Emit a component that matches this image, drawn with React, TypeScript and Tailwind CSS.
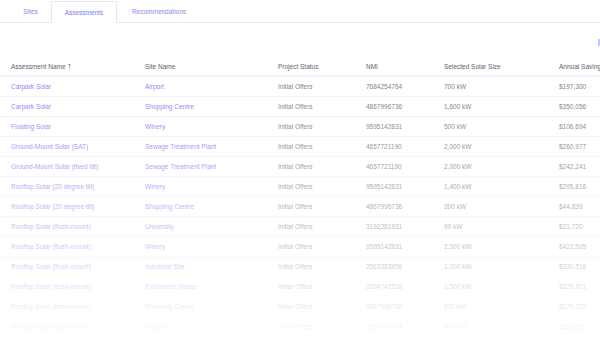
import React from 'react';

type Row = {
  name: string;
  site: string;
  status: string;
  nmi: string;
  size: string;
  savings: string;
};

const rows: Row[] = [
  { name: 'Carpark Solar', site: 'Airport', status: 'Initial Offers', nmi: '7684254764', size: '700 kW', savings: '$197,300' },
  { name: 'Carpark Solar', site: 'Shopping Centre', status: 'Initial Offers', nmi: '4867996736', size: '1,600 kW', savings: '$350,056' },
  { name: 'Floating Solar', site: 'Winery', status: 'Initial Offers', nmi: '9595142831', size: '500 kW', savings: '$106,694' },
  { name: 'Ground-Mount Solar (SAT)', site: 'Sewage Treatment Plant', status: 'Initial Offers', nmi: '4657721190', size: '2,000 kW', savings: '$260,977' },
  { name: 'Ground-Mount Solar (fixed tilt)', site: 'Sewage Treatment Plant', status: 'Initial Offers', nmi: '4657721190', size: '2,000 kW', savings: '$242,241' },
  { name: 'Rooftop Solar (20 degree tilt)', site: 'Winery', status: 'Initial Offers', nmi: '9595142831', size: '1,400 kW', savings: '$295,816' },
  { name: 'Rooftop Solar (20 degree tilt)', site: 'Shopping Centre', status: 'Initial Offers', nmi: '4867996736', size: '200 kW', savings: '$44,839' },
  { name: 'Rooftop Solar (flush-mount)', site: 'University', status: 'Initial Offers', nmi: '3192261931', size: '99 kW', savings: '$21,720' },
  { name: 'Rooftop Solar (flush-mount)', site: 'Winery', status: 'Initial Offers', nmi: '9595142831', size: '2,000 kW', savings: '$422,595' },
  { name: 'Rooftop Solar (flush-mount)', site: 'Industrial Site', status: 'Initial Offers', nmi: '2563383856', size: '1,000 kW', savings: '$330,516' },
  { name: 'Rooftop Solar (flush-mount)', site: 'Parliament House', status: 'Initial Offers', nmi: '2304742518', size: '1,500 kW', savings: '$329,971' },
  { name: 'Rooftop Solar (flush-mount)', site: 'Shopping Centre', status: 'Initial Offers', nmi: '4867996736', size: '800 kW', savings: '$175,052' },
  { name: 'Rooftop Solar (flush-mount)', site: 'Airport', status: 'Initial Offers', nmi: '7684254764', size: '300 kW', savings: '$66,252' },
];

export default function App() {
  return (
    <div className="relative w-[600px] h-[349px] overflow-hidden bg-white text-[6.5px] font-['Liberation_Sans',Arial,sans-serif]">
      {/* tabs */}
      <div className="flex h-[23px] items-end border-b border-[#e9eaf7] pl-[10px]">
        <div className="flex h-[22px] w-[41px] items-center justify-center pt-px text-[#858af1]">Sites</div>
        <div className="flex h-[22px] w-[66px] -mb-px items-center justify-center rounded-t-[2px] border border-b-0 border-[#e6e7f3] bg-white text-[#7a80ef]">
          Assessments
        </div>
        <div className="flex h-[22px] w-[84px] items-center justify-center pt-px text-[#858af1]">Recommendations</div>
      </div>

      {/* toolbar strip */}
      <div className="flex h-[35px] items-center justify-end">
        <div className="mt-[4px] h-[7px] w-[2px] bg-[#c3c6f6]" />
      </div>

      {/* table */}
      <div className="w-[700px]">
        <div className="flex h-[19px] items-center border-b-2 border-[#f1f1f9] text-[#60646e]">
          <div className="w-[145px] pl-[11px]">
            Assessment Name <span className="text-[9px] font-bold leading-none text-[#444]">↑</span>
          </div>
          <div className="w-[133px]">Site Name</div>
          <div className="w-[88px]">Project Status</div>
          <div className="w-[78px]">NMI</div>
          <div className="w-[115px]">Selected Solar Size</div>
          <div className="w-[100px]">Annual Savings</div>
        </div>
        {rows.map((r, i) => (
          <div key={i} className="flex h-[20px] items-center border-b border-[#f3f3f7]">
            <div className="w-[145px] pl-[11px] text-[#878cf1]">{r.name}</div>
            <div className="w-[133px] text-[#878cf1]">{r.site}</div>
            <div className="w-[88px] text-[#80838b]">{r.status}</div>
            <div className="w-[78px] text-[#80838b]">{r.nmi}</div>
            <div className="w-[115px] text-[#80838b]">{r.size}</div>
            <div className="w-[100px] text-[#80838b]">{r.savings}</div>
          </div>
        ))}
      </div>

      {/* fade overlay */}
      <div className="pointer-events-none absolute inset-x-0 top-[95px] bottom-0 bg-gradient-to-b from-white/0 via-white/55 via-60% to-white" />
    </div>
  );
}
